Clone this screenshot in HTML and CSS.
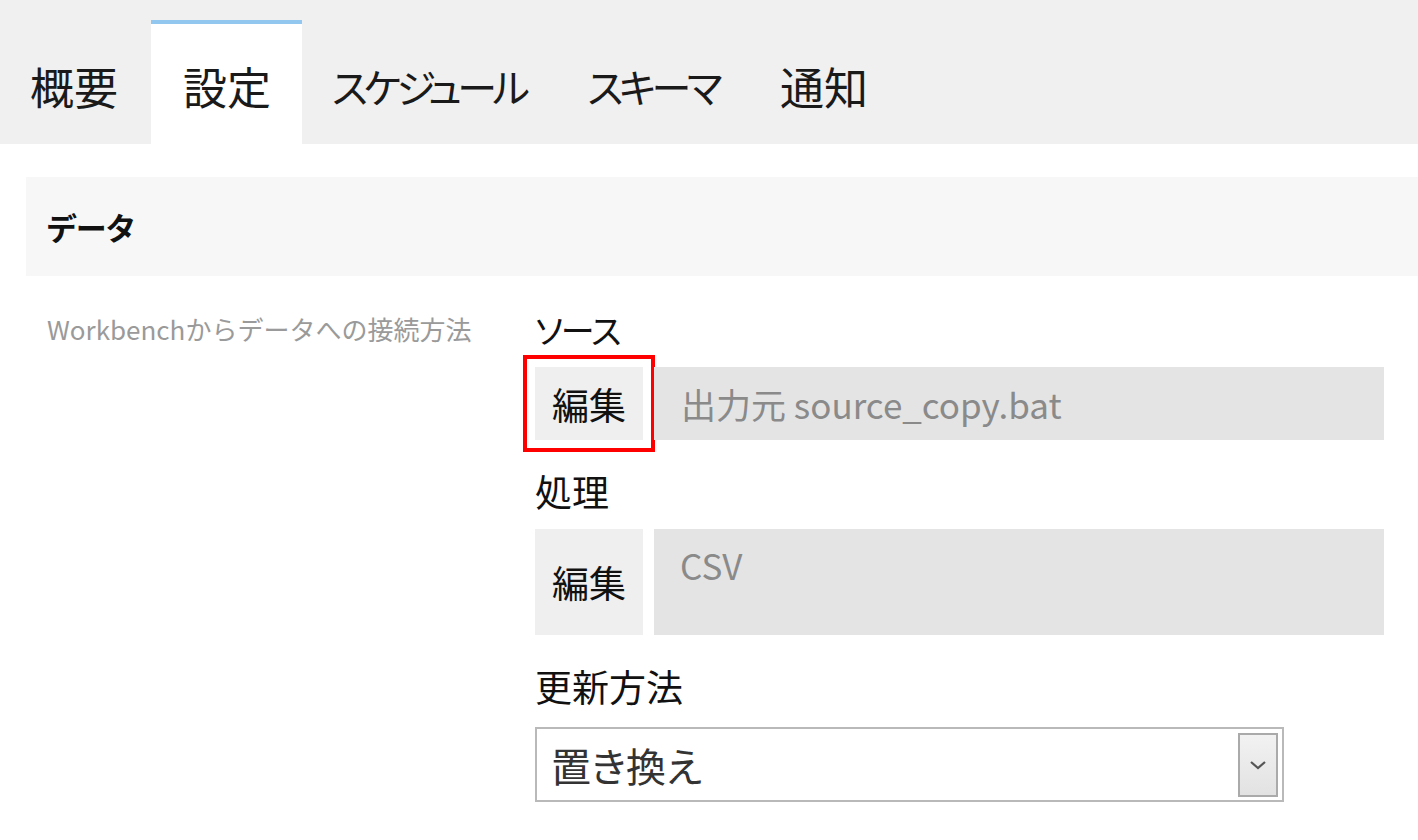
FILE: index.html
```html
<!DOCTYPE html>
<html lang="ja">

    <head>
        <meta charset="UTF-8">
        <meta name="viewport" content="width=device-width, initial-scale=1.0">
        <title>設定</title>

        <link rel="stylesheet" href="styles.css">
    </head>

    <body>
        <nav class="tabs">
            <div class="tab tab--first">概要</div>
            <div class="tab tab--active">設定</div>
            <div class="tab tab--kana">スケジュール</div>
            <div class="tab tab--kana">スキーマ</div>
            <div class="tab">通知</div>
        </nav>

        <main class="panel">
            <div class="section-head">データ</div>

            <div class="settings">
                <p class="settings__desc">Workbenchからデータへの接続方法</p>

                <div class="settings__fields">
                    <div class="field">
                        <div class="field__label field__label--kana">ソース</div>
                        <div class="field__row">
                            <button class="edit-btn edit-btn--marked">編集</button>
                            <div class="field__value">出力元 source_copy.bat</div>
                        </div>
                    </div>

                    <div class="field">
                        <div class="field__label">処理</div>
                        <div class="field__row field__row--tall">
                            <button class="edit-btn">編集</button>
                            <div class="field__value field__value--top">CSV</div>
                        </div>
                    </div>

                    <div class="field field--select">
                        <div class="field__label">更新方法</div>
                        <div class="select">
                            <span class="select__text">置き換え</span>
                            <span class="select__arrow">
                                <svg width="18" height="12" viewBox="0 0 18 12">
                                    <polyline points="2,3 9,9 16,3" fill="none" stroke="#555" stroke-width="2.2" />
                                </svg>
                            </span>
                        </div>
                    </div>
                </div>
            </div>
        </main>
    </body>

</html>
```

FILE: styles.css
```css
* {
    margin: 0;
    padding: 0;
    box-sizing: border-box;
}

body {
    font-family: "Noto Sans CJK JP", "Noto Sans", sans-serif;
    font-feature-settings: "palt";
    color: #111;
    background: #fff;
    overflow: hidden;
}

.tabs {
    display: flex;
    align-items: flex-end;
    height: 144px;
    padding-top: 20px;
    background: #f0f0f0;
}

.tab {
    height: 124px;
    padding: 4px 30px 0;
    display: flex;
    align-items: center;
    font-size: 44px;
    color: #1a1a1a;
    border-top: 4px solid transparent;
}

.tab--first {
    padding-right: 33px;
}

.tab--active {
    background: #fff;
    border-top-color: #92c8ef;
    padding: 4px 31px 0 32px;
}

.tab--kana {
    font-size: 40px;
    letter-spacing: -4.5px;
    padding: 4px 32px 0 30px;
}

.panel {
    padding: 33px 0 0 26px;
}

.section-head {
    height: 99px;
    display: flex;
    align-items: center;
    padding-left: 21px;
    background: #f7f7f7;
    font-size: 31px;
    font-weight: bold;
}

.settings {
    display: flex;
    padding-top: 30px;
}

.settings__desc {
    width: 509px;
    padding: 7px 0 0 21px;
    font-size: 26px;
    font-feature-settings: normal;
    line-height: 32px;
    color: #9a9a9a;
    white-space: nowrap;
}

.settings__fields {
    width: 849px;
}

.field + .field {
    margin-top: 27px;
}

.field--select .field__label {
    margin-bottom: 17px;
}

.field__label {
    font-size: 37px;
    line-height: 48px;
    margin-bottom: 14px;
}

.field__label--kana {
    font-size: 34px;
    letter-spacing: -2px;
    margin-bottom: 13px;
}

.field__row {
    display: flex;
    gap: 11px;
    height: 73px;
}

.field__row--tall {
    height: 106px;
}

.edit-btn {
    width: 108px;
    border: none;
    background: #efefef;
    font-family: inherit;
    font-size: 37px;
    color: #111;
}

.edit-btn--marked {
    outline: 4px solid #ff0000;
    outline-offset: 8px;
}

.field__value {
    flex: 1;
    display: flex;
    align-items: center;
    padding-left: 27px;
    background: #e4e4e4;
    font-size: 35px;
    color: #8a8a8a;
}

.field__value--top {
    align-items: flex-start;
    padding-top: 10px;
    padding-left: 26px;
}

.select {
    width: 749px;
    height: 75px;
    display: flex;
    align-items: center;
    justify-content: space-between;
    padding: 0 4px 0 14px;
    border: 2px solid #b9b9b9;
    background: #fff;
}

.select__text {
    font-size: 40px;
    color: #333;
}

.select__arrow {
    width: 40px;
    height: 64px;
    display: flex;
    align-items: center;
    justify-content: center;
    border: 2px solid #aaa;
    background: linear-gradient(#f2f2f2, #e2e2e2);
}
```
